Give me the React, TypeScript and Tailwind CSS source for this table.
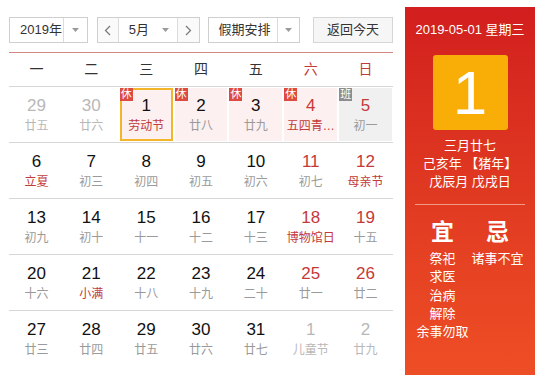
import React from "react";

type Cell = {
  n: number;
  l: string;
  other?: boolean;
  weekend?: boolean;
  fest?: boolean;
  bg?: "pink" | "gray";
  badge?: "休" | "班";
  sel?: boolean;
};

const rows: Cell[][] = [
  [
    { n: 29, l: "廿五", other: true },
    { n: 30, l: "廿六", other: true },
    { n: 1, l: "劳动节", fest: true, bg: "pink", badge: "休", sel: true },
    { n: 2, l: "廿八", bg: "pink", badge: "休" },
    { n: 3, l: "廿九", bg: "pink", badge: "休" },
    { n: 4, l: "五四青…", weekend: true, fest: true, bg: "pink", badge: "休" },
    { n: 5, l: "初一", weekend: true, bg: "gray", badge: "班" },
  ],
  [
    { n: 6, l: "立夏", fest: true },
    { n: 7, l: "初三" },
    { n: 8, l: "初四" },
    { n: 9, l: "初五" },
    { n: 10, l: "初六" },
    { n: 11, l: "初七", weekend: true },
    { n: 12, l: "母亲节", weekend: true, fest: true },
  ],
  [
    { n: 13, l: "初九" },
    { n: 14, l: "初十" },
    { n: 15, l: "十一" },
    { n: 16, l: "十二" },
    { n: 17, l: "十三" },
    { n: 18, l: "博物馆日", weekend: true, fest: true },
    { n: 19, l: "十五", weekend: true },
  ],
  [
    { n: 20, l: "十六" },
    { n: 21, l: "小满", fest: true },
    { n: 22, l: "十八" },
    { n: 23, l: "十九" },
    { n: 24, l: "二十" },
    { n: 25, l: "廿一", weekend: true },
    { n: 26, l: "廿二", weekend: true },
  ],
  [
    { n: 27, l: "廿三" },
    { n: 28, l: "廿四" },
    { n: 29, l: "廿五" },
    { n: 30, l: "廿六" },
    { n: 31, l: "廿七" },
    { n: 1, l: "儿童节", other: true },
    { n: 2, l: "廿九", other: true },
  ],
];

const Arrow = () => (
  <svg width="9" height="6" viewBox="0 0 9 6">
    <path d="M1 1 L8 1 L4.5 5 Z" fill="#9a9a9a" />
  </svg>
);

function DayCell({ c }: { c: Cell }) {
  const bg =
    c.bg === "pink" ? "bg-[#fdf0f0]" : c.bg === "gray" ? "bg-[#f0f0f0]" : "bg-white";
  const numColor = c.other
    ? "text-[#b8b8b8]"
    : c.weekend
    ? "text-[#c6393a]"
    : "text-[#111]";
  const lunarColor = c.other
    ? "text-[#b8b8b8]"
    : c.fest
    ? "text-[#c23a3a]"
    : "text-[#9a9a9a]";
  return (
    <div className={`relative h-[53px] mx-[1px] my-[1px] ${bg}`}>
      {c.sel && (
        <div className="absolute inset-0 border-[2px] border-[#f3b52a]" />
      )}
      {c.badge && (
        <div
          className={`absolute left-0 top-0 w-[13px] h-[13px] flex items-center justify-center text-white text-[11px] leading-none ${
            c.badge === "休" ? "bg-[#dd4a40]" : "bg-[#8d8d8d]"
          }`}
        >
          {c.badge}
        </div>
      )}
      <div className="flex flex-col items-center pt-[8px]">
        <div className={`text-[17px] leading-[20px] ${numColor}`}>{c.n}</div>
        <div className={`text-[12px] leading-[18px] mt-[1px] whitespace-nowrap ${lunarColor}`}>
          {c.l}
        </div>
      </div>
    </div>
  );
}

export default function App() {
  const week = ["一", "二", "三", "四", "五", "六", "日"];
  return (
    <div
      className="w-[535px] h-[375px] bg-white flex overflow-hidden"
      style={{ fontFamily: '"Liberation Sans", "Noto Sans CJK SC", sans-serif' }}
    >
      <div className="w-[384px] ml-[9px] pt-[17px]">
        <div className="flex items-center h-[26px] text-[13px] text-[#333]">
          <div className="flex h-[26px] w-[79px] border border-[#cfcfcf]">
            <div className="flex-1 flex items-center pl-[10px]">2019年</div>
            <div className="w-[24px] border-l border-[#dcdcdc] flex items-center justify-center">
              <Arrow />
            </div>
          </div>
          <div className="flex h-[26px] w-[104px] ml-[9px] border border-[#cfcfcf]">
            <div className="w-[21px] flex items-center justify-center text-[#777] border-r border-[#dcdcdc] bg-[#fafafa]">
              <svg width="7" height="11" viewBox="0 0 7 11">
                <path d="M6 1 L1.5 5.5 L6 10" stroke="#777" strokeWidth="1.2" fill="none" />
              </svg>
            </div>
            <div className="flex-1 flex items-center pl-[10px] border-r border-[#dcdcdc]">
              <span className="flex-1">5月</span>
              <span className="pr-[7px] flex items-center">
                <Arrow />
              </span>
            </div>
            <div className="w-[21px] flex items-center justify-center bg-[#fafafa]">
              <svg width="7" height="11" viewBox="0 0 7 11">
                <path d="M1 1 L5.5 5.5 L1 10" stroke="#777" strokeWidth="1.2" fill="none" />
              </svg>
            </div>
          </div>
          <div className="flex h-[26px] w-[92px] ml-[8px] border border-[#cfcfcf]">
            <div className="flex-1 flex items-center pl-[9px] border-r border-[#dcdcdc]">
              假期安排
            </div>
            <div className="w-[21px] flex items-center justify-center">
              <Arrow />
            </div>
          </div>
          <div className="flex h-[26px] w-[80px] ml-[13px] border border-[#d6d6d6] bg-[#f6f6f6] items-center justify-center">
            返回今天
          </div>
        </div>
        <div className="mt-[9px] h-[1px] bg-[#cf8780]" />
        <div className="grid grid-cols-7 h-[33px] items-center text-[14px]">
          {week.map((w, i) => (
            <div
              key={w}
              className={`text-center ${i >= 5 ? "text-[#c6393a]" : "text-[#333]"}`}
            >
              {w}
            </div>
          ))}
        </div>
        {rows.map((r, ri) => (
          <div key={ri} className="border-t border-[#d6d6d6] grid grid-cols-7">
            {r.map((c, ci) => (
              <DayCell key={ci} c={c} />
            ))}
          </div>
        ))}
      </div>
      <div className="ml-[12px] mt-[7px] w-[130px] h-[368px] bg-gradient-to-b from-[#d21e1e] to-[#ee4e25] text-white flex flex-col items-center">
        <div className="mt-[15px] text-[13px] leading-[16px]">2019-05-01 星期三</div>
        <div className="mt-[17px] w-[75px] h-[75px] rounded-[3px] bg-[#f8ae06] flex items-center justify-center text-[62px] leading-none">
          1
        </div>
        <div className="mt-[7px] text-[13px] leading-[18px] text-center">
          <div>三月廿七</div>
          <div>己亥年 【猪年】</div>
          <div>戊辰月 戊戌日</div>
        </div>
        <div className="mt-[13px] w-[110px] h-[1px] bg-[#f29a86]" />
        <div className="w-[110px] flex mt-[14px]">
          <div className="w-[55px] flex flex-col items-center">
            <div className="text-[23px] leading-[26px] font-semibold">宜</div>
            <div className="text-[13px] leading-[18.3px] mt-[5px] flex flex-col items-center">
              <div>祭祀</div>
              <div>求医</div>
              <div>治病</div>
              <div>解除</div>
              <div className="whitespace-nowrap">余事勿取</div>
            </div>
          </div>
          <div className="w-[55px] flex flex-col items-center">
            <div className="text-[23px] leading-[26px] font-semibold">忌</div>
            <div className="text-[13px] leading-[18.3px] mt-[5px] whitespace-nowrap">
              诸事不宜
            </div>
          </div>
        </div>
      </div>
    </div>
  );
}
